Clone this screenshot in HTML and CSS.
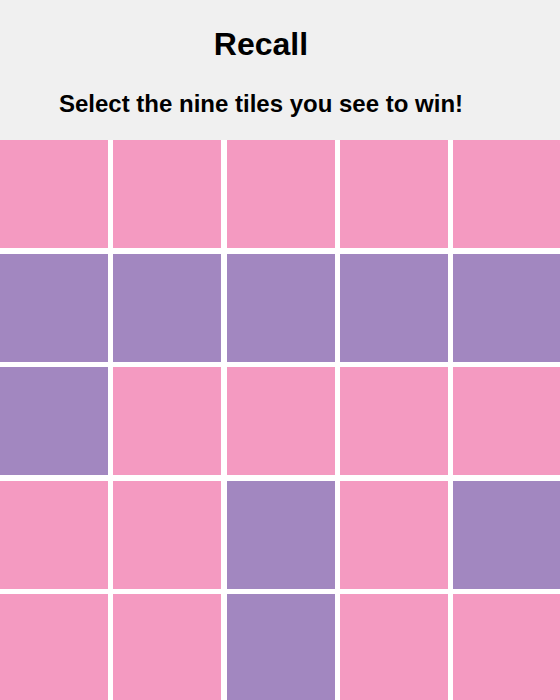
FILE: index.html
```html
<!DOCTYPE html>
<html lang="en">
<head>
<meta charset="utf-8">
<title>Recall</title>
<link rel="stylesheet" href="styles.css">
</head>
<body>
<header class="header">
  <h1 class="title">Recall</h1>
  <h2 class="subtitle">Select the nine tiles you see to win!</h2>
</header>
<main class="board">
  <div class="tile pink"></div><div class="tile pink"></div><div class="tile pink"></div><div class="tile pink"></div><div class="tile pink"></div>
  <div class="tile purple"></div><div class="tile purple"></div><div class="tile purple"></div><div class="tile purple"></div><div class="tile purple"></div>
  <div class="tile purple"></div><div class="tile pink"></div><div class="tile pink"></div><div class="tile pink"></div><div class="tile pink"></div>
  <div class="tile pink"></div><div class="tile pink"></div><div class="tile purple"></div><div class="tile pink"></div><div class="tile purple"></div>
  <div class="tile pink"></div><div class="tile pink"></div><div class="tile purple"></div><div class="tile pink"></div><div class="tile pink"></div>
</main>
</body>
</html>
```
FILE: styles.css
```css
html, body {
  margin: 0;
  padding: 0;
  background: #ffffff;
  overflow: hidden;
}
body {
  width: 560px;
  height: 700px;
  font-family: "Liberation Sans", Arial, Helvetica, sans-serif;
  color: #000;
}
.header {
  background: #f0f0f0;
  height: 140px;
  box-sizing: border-box;
  padding: 26px 38px 0 0;
  text-align: center;
}
.title {
  margin: 0;
  font-size: 32px;
  font-weight: bold;
}
.subtitle {
  margin: 27px 0 0;
  font-size: 24px;
  font-weight: bold;
}
.board {
  display: grid;
  grid-template-columns: repeat(5, 108px);
  grid-auto-rows: 108px;
  column-gap: 5.25px;
  row-gap: 5.5px;
  width: 580px;
}
.tile.pink { background: #f49ac1; }
.tile.purple { background: #a287c0; }
```
